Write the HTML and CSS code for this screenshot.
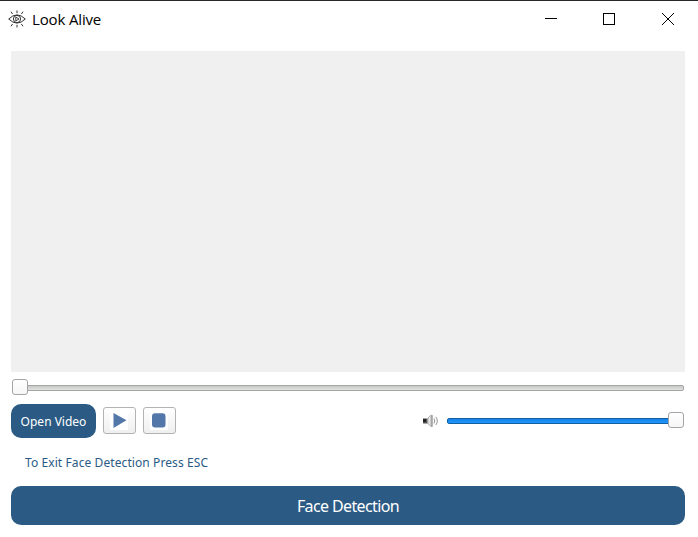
FILE: index.html
```html
<!DOCTYPE html>
<html lang="en">
<head>
<meta charset="utf-8">
<title>Look Alive</title>
<link rel="stylesheet" href="styles.css">
</head>
<body>
<div class="window">
  <header class="titlebar">
    <svg class="logo" width="18" height="18" viewBox="0 0 18 18" fill="none" stroke="#333" stroke-width="1">
      <path d="M.7 9Q9 .8 17.3 9Q9 17.2 .7 9Z"/>
      <circle cx="9" cy="9" r="3.6"/>
      <path d="M7.8 7.1L11 9L7.8 10.9Z" stroke-width=".9"/>
      <path d="M9 .5V3.2M9 14.8V17.5M3 1.7L4.6 4M15 1.7L13.4 4M3 16.3L4.6 14M15 16.3L13.4 14"/>
    </svg>
    <h1 class="title">Look Alive</h1>
    <svg class="controls" width="132" height="14" viewBox="0 0 132 14" fill="none" stroke="#000" shape-rendering="crispEdges">
      <path d="M1 6.5H13"/>
      <rect x="59.5" y="1.5" width="11" height="11"/>
      <path d="M118 1L130 13M130 1L118 13" shape-rendering="auto"/>
    </svg>
  </header>
  <main class="content">
    <div class="video"></div>
    <div class="slider seek"><div class="groove"></div><div class="handle"></div></div>
    <div class="toolbar">
      <button class="open">Open Video</button>
      <button class="tool"><svg width="31" height="25" viewBox="0 0 31 25"><path fill="#fff" d="M6 2H24V22H6Z"/><path fill="#5477aa" d="M9.5 5L22.5 12.2L9.5 20Z"/></svg></button>
      <button class="tool"><svg width="31" height="25" viewBox="0 0 31 25"><path fill="#fff" d="M6 2H24V22H6Z"/><rect x="8" y="5.2" width="13.5" height="14.3" rx="3" fill="#5477aa"/></svg></button>
      <svg class="speaker" width="17" height="14" viewBox="0 0 17 14">
        <defs><linearGradient id="cone"><stop stop-color="#b4b4b4"/><stop offset=".45" stop-color="#eee"/><stop offset="1" stop-color="#888"/></linearGradient></defs>
        <path fill="#555" d="M1 4.5H5.5V9.5H1Z"/>
        <path fill="#222" d="M1 5H4V8H1Z"/>
        <path fill="url(#cone)" stroke="#999" stroke-width=".7" d="M5.5 4.5L8.7 1.3H10.3V12.5H8.7L5.5 9.2Z"/>
        <path fill="none" stroke="#888" stroke-width=".9" d="M12 4.5Q13.5 7 12 9.5M13.8 2.8Q16.9 7 13.8 11"/>
      </svg>
      <div class="slider volume"><div class="groove"></div><div class="handle"></div></div>
    </div>
    <p class="hint">To Exit Face Detection Press ESC</p>
    <button class="detect"><span>Face Detection</span></button>
  </main>
</div>
</body>
</html>
```
FILE: styles.css
```css
* { box-sizing: border-box; }
body { margin: 0; background: #fff; font-family: "Noto Sans", sans-serif; }
button { font-family: inherit; padding: 0; border: 0; }
.window { height: 537px; border-top: 1px solid #2b2729; }
.titlebar { display: flex; align-items: center; height: 36px; padding: 0 22px 0 8px; }
.title { margin: -1px 0 0 6px; font: 400 15px "Open Sans", sans-serif; letter-spacing: -.15px; color: #000; }
.controls { margin-left: auto; }
.content { display: flex; flex-direction: column; padding: 14px 13px 0 11px; }
.video { height: 321px; background: #f0f0f0; }
.slider { position: relative; display: flex; align-items: center; height: 16px; }
.seek { margin: 7px 1px 0; }
.groove { flex: 1; height: 6px; border: 1px solid #a5a5a5; border-radius: 2px; background: linear-gradient(#c8cac8, #e0e2e0); }
.seek .groove { margin-top: 2px; }
.handle { position: absolute; top: 0; left: 0; width: 16px; height: 16px; border: 1px solid #a5a5a5; border-radius: 3px; background: linear-gradient(#fff, #f6f6f6); }
.toolbar { display: flex; align-items: center; height: 34px; margin-top: 9px; padding-right: 1px; }
.open { width: 85px; height: 34px; border-radius: 10px; background: #2b5b84; color: #fff; font-size: 12px; }
.tool { display: flex; width: 33px; height: 27px; margin: -2px 0 0 7px; border: 1px solid #b3b3b3; border-radius: 3px; background: linear-gradient(#fff, #efefef); }
.speaker { margin-left: 246px; }
.volume { flex: 1; margin: -2px 0 0 8px; }
.volume .groove { margin-top: 2px; border-color: #1160a5; background: linear-gradient(#1684e4, #2196ff); }
.volume .handle { left: auto; right: 0; }
.hint { height: 20px; margin: 15px 0 0 14px; color: #2b5b84; font-size: 12px; letter-spacing: .09px; line-height: 20px; white-space: nowrap; }
.detect { height: 39px; margin-top: 13px; border-radius: 10px; background: #2b5b84; color: #fff; font-size: 16px; letter-spacing: -.62px; }
```
